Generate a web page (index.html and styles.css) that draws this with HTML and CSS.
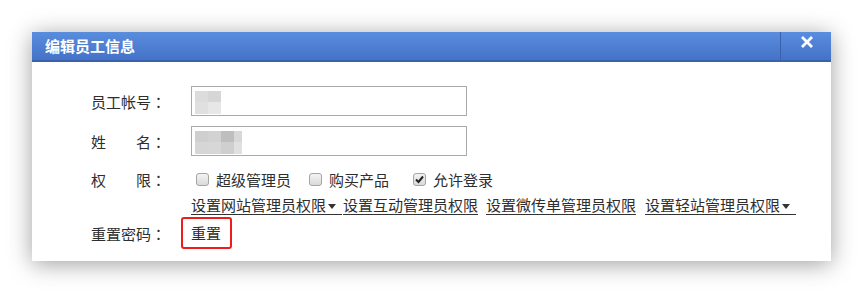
FILE: index.html
```html
<!DOCTYPE html>
<html lang="zh-CN">
<head>
<meta charset="utf-8">
<title>编辑员工信息</title>
<link rel="stylesheet" href="styles.css">
</head>
<body>
<div class="dialog">
  <div class="dialog-header">
    <div class="dialog-title">编辑员工信息</div>
    <button class="dialog-close" type="button" aria-label="关闭">
      <svg width="14" height="12" viewBox="0 0 14 12"><path d="M2 1 L12 11 M12 1 L2 11" stroke="#fff" stroke-width="2.8" stroke-linecap="butt"/></svg>
    </button>
  </div>
  <div class="dialog-body">
    <div class="form-row row-input">
      <div class="form-label">员工帐号<span class="colon" lang="ja">：</span></div>
      <div class="fake-input">
        <div class="blur blur-a">
          <span class="px c1"></span><span class="px c2"></span>
          <span class="px c3"></span><span class="px c4"></span>
        </div>
      </div>
    </div>
    <div class="form-row row-input">
      <div class="form-label">姓　　名<span class="colon" lang="ja">：</span></div>
      <div class="fake-input">
        <div class="blur blur-b">
          <span class="px d1"></span><span class="px d2"></span><span class="px d3"></span><span class="px d4"></span>
          <span class="px d5"></span><span class="px d6"></span><span class="px d7"></span><span class="px d8"></span>
        </div>
      </div>
    </div>
    <div class="form-row row-perm">
      <div class="form-label">权　　限<span class="colon" lang="ja">：</span></div>
      <div class="perm-list">
        <label class="perm-item"><span class="cbox"></span>超级管理员</label>
        <label class="perm-item"><span class="cbox"></span>购买产品</label>
        <label class="perm-item"><span class="cbox checked"><svg width="11" height="11" viewBox="0 0 11 11"><path d="M2 5.5 L4.5 8 L9 2.5" fill="none" stroke="#222" stroke-width="2"/></svg></span>允许登录</label>
      </div>
    </div>
    <div class="form-row row-links">
      <a class="perm-link has-menu" href="#">设置网站管理员权限<span class="caret"></span></a>
      <a class="perm-link" href="#">设置互动管理员权限</a>
      <a class="perm-link" href="#">设置微传单管理员权限</a>
      <a class="perm-link has-menu" href="#">设置轻站管理员权限<span class="caret"></span></a>
    </div>
    <div class="form-row row-reset">
      <div class="form-label">重置密码<span class="colon" lang="ja">：</span></div>
      <a class="reset-link" href="#">重置</a>
    </div>
  </div>
</div>
</body>
</html>
```

FILE: styles.css
```css
html, body {
  margin: 0;
  padding: 0;
  background: #fff;
}
body {
  padding: 32px;
  font-family: "Noto Sans CJK SC", "Liberation Sans", sans-serif;
  font-size: 15px;
  color: #2e2e2e;
}
.dialog {
  width: 799px;
  background: #fff;
  box-shadow: 0 3px 22px rgba(0, 0, 0, 0.38);
}
.dialog-header {
  display: flex;
  height: 28px;
  background: linear-gradient(#5a8ddd, #4472c8);
  border-bottom: 2px solid #3a62ab;
}
.dialog-title {
  flex: 1;
  padding-left: 13px;
  line-height: 27px;
  font-size: 15px;
  font-weight: bold;
  color: #fff;
}
.dialog-close {
  width: 51px;
  height: 28px;
  margin: 0;
  padding: 0 0 8px 2px;
  border: 0;
  border-left: 1px solid #3a62ab;
  background: transparent;
  display: flex;
  align-items: center;
  justify-content: center;
}
.dialog-body {
  padding: 24px 0 12px 59px;
}
.form-row {
  display: flex;
  align-items: center;
}
.form-label {
  width: 100px;
  flex: none;
  white-space: nowrap;
}
.colon {
  font-family: "Noto Sans CJK JP", "Noto Sans CJK SC", sans-serif;
}
.row-input {
  height: 30px;
  margin-bottom: 10px;
}
.fake-input {
  box-sizing: border-box;
  width: 276px;
  height: 30px;
  border: 1px solid #aaa;
  padding: 4px 3px;
}
.blur {
  display: grid;
  grid-template-rows: 11px 12px;
}
.blur-a { grid-template-columns: 13px 13px; }
.blur-b { grid-template-columns: 13px 13px 13px 8px; }
.c1 { background: #dcdcdc; }
.c2 { background: #d6d6d6; }
.c3 { background: #e0e0e0; }
.c4 { background: #e7e7e7; }
.d1 { background: #cfcfcf; }
.d2 { background: #d2d2d2; }
.d3 { background: #bebebe; }
.d4 { background: #d8d8d8; }
.d5 { background: #d6d6d6; }
.d6 { background: #d7d7d7; }
.d7 { background: #cfcfcf; }
.d8 { background: #e0e0e0; }
.row-perm {
  height: 27px;
}
.perm-list {
  display: flex;
  align-items: center;
  padding-left: 5px;
}
.perm-item {
  display: flex;
  align-items: center;
  white-space: nowrap;
}
.perm-item + .perm-item { margin-left: 18px; }
.perm-item:last-child { margin-left: 24px; }
.cbox {
  box-sizing: border-box;
  width: 13px;
  height: 13px;
  margin-right: 7px;
  border: 1px solid #a5a5a5;
  border-radius: 3px;
  background: linear-gradient(#f4f4f4, #d9d9d9);
  display: flex;
  align-items: center;
  justify-content: center;
}
.row-links {
  height: 24px;
  padding-left: 100px;
  align-items: flex-end;
}
.perm-link {
  display: inline-flex;
  align-items: center;
  height: 19px;
  line-height: 19px;
  margin-bottom: 2px;
  color: #2e2e2e;
  text-decoration: none;
  border-bottom: 1px solid #333;
  white-space: nowrap;
}
.perm-link + .perm-link { margin-left: 8px; }
.perm-link:last-child { margin-left: 9px; }
.has-menu + .perm-link { margin-left: 1px; }
.has-menu { padding-right: 6px; }
.caret {
  width: 0;
  height: 0;
  margin-left: 2px;
  margin-top: 3px;
  border-left: 4.5px solid transparent;
  border-right: 4.5px solid transparent;
  border-top: 5px solid #333;
}
.row-reset {
  height: 32px;
}
.reset-link {
  box-sizing: border-box;
  height: 32px;
  margin-left: -10px;
  padding: 0 9px 0 8px;
  border: 2px solid #ee1c1c;
  border-radius: 3px;
  line-height: 28px;
  color: #2e2e2e;
  text-decoration: none;
}
```
